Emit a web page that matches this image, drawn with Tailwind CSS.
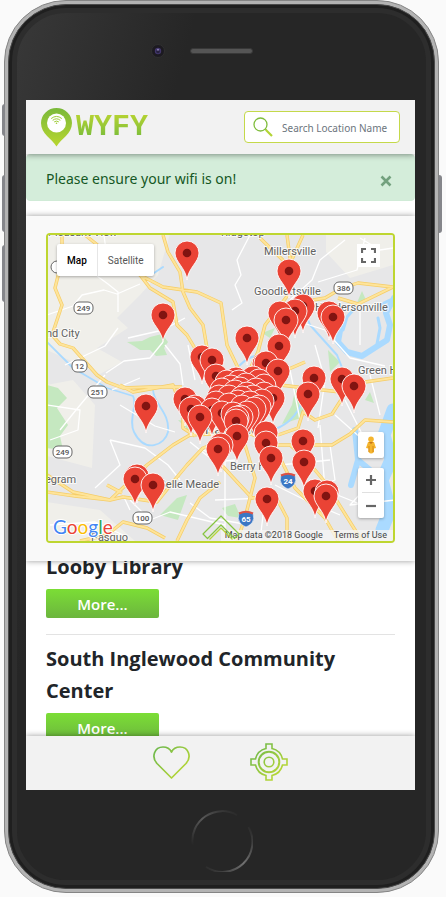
<!DOCTYPE html>
<html lang="en">
<head>
<meta charset="utf-8">
<meta name="viewport" content="width=device-width, initial-scale=1">
<title>WYFY</title>
<script src="https://cdn.jsdelivr.net/npm/@tailwindcss/browser@4"></script>
</head>
<body class="bg-[#fafafa] font-['Noto_Sans','Open_Sans',sans-serif] text-[#212529]">
<div class="h-screen min-h-[600px] pl-1 pr-[7px] pb-1">
  <div class="relative h-full rounded-[62px] bg-[#b3b3b3] border border-[#858585] p-[3px]">
    <!-- hardware buttons -->
    <i class="absolute -left-[3px] top-[103px] h-8 w-[3px] rounded-l bg-[#85868b]"></i>
    <i class="absolute -left-[3px] top-[174px] h-[57px] w-[3px] rounded-l bg-[#85868b]"></i>
    <i class="absolute -left-[3px] top-[244px] h-[57px] w-[3px] rounded-l bg-[#85868b]"></i>
    <i class="absolute -right-[4px] top-[174px] h-[58px] w-[3px] rounded-r bg-[#85868b]"></i>

    <div class="h-full rounded-[58px] border border-[#4a4a4a] bg-[#1f1f1f] p-[3px]">
      <div class="flex h-full flex-col rounded-[54px] border-[5px] border-[#2d2d2d] bg-[#262626] bg-linear-[105deg,#383838_0%,#262626_28%] pr-[11px] pl-[9px]">
        <div class="flex h-[87px] shrink-0 items-center justify-center pb-[11px] pl-[2px]">
          <div class="relative h-[6px] w-[63px] rounded-full border border-[#383838] bg-[#555]">
            <svg class="absolute -left-[41px] -top-[6px] size-4" viewBox="0 0 16 16" aria-hidden="true"><circle cx="8" cy="8" r="6.5" fill="#1c1a20" stroke="#303030"/><circle cx="8" cy="8" r="3.2" fill="#41366a"/><circle cx="8" cy="8.5" r="1.8" fill="#27213f"/><circle cx="8" cy="6.8" r="1" fill="#8e84b4"/></svg>
          </div>
        </div>

        <main class="flex min-h-0 flex-1 flex-col overflow-hidden bg-white">
          <header class="relative z-20 flex h-[54px] shrink-0 items-center justify-between bg-[#f2f2f2] px-[15px] shadow-[0_1px_6px_rgba(0,0,0,.4)]">
            <a href="#" class="flex items-center gap-1" aria-label="WYFY home">
              <svg class="h-[39px] w-[31px]" viewBox="0 0 31 39" aria-hidden="true">
                <defs><linearGradient id="g" x1="0" y1="0" x2="0" y2="1"><stop offset="0" stop-color="#7ab93a"/><stop offset="1" stop-color="#b8d62f"/></linearGradient></defs>
                <path d="M15.500 38.500C11 30.500 0 26 0 15A15.500 15 0 0 1 31 15C31 26 20 30.500 15.500 38.500Z" fill="url(#g)"/>
                <circle cx="15.500" cy="15" r="9.500" fill="#fff"/>
                <g fill="none" stroke="#9ccb35" stroke-linecap="round"><path d="M10.500 10.300Q15.500 6.300 20.500 10.300M12 12.100Q15.500 9.300 19 12.100M13.500 13.700Q15.500 12.200 17.500 13.700"/></g><circle cx="15.500" cy="15.200" r=".8" fill="#9ccb35"/>
              </svg>
              <span class="bg-linear-to-b from-[#c3d82e] to-[#62b53c] bg-clip-text font-['Liberation_Mono',monospace] text-[30px] leading-[36px] font-bold text-transparent">WYFY</span>
            </a>
            <label class="flex h-8 w-[156px] items-center gap-[9px] rounded border border-[#c4d94a] bg-white pl-2">
              <svg class="size-5 shrink-0" viewBox="0 0 20 20" fill="none" aria-hidden="true"><circle cx="7.500" cy="7.500" r="6.500" stroke="#7fbd3c" stroke-width="1.300"/><path d="M12.500 12L13.500 13.500" stroke="#8fc43a" stroke-width="1.500"/><path d="M13 13L19 19" stroke="#b3d435" stroke-width="2.200"/></svg>
              <input type="search" placeholder="Search Location Name" aria-label="Search location name" class="min-w-0 flex-1 bg-transparent pt-[2px] text-[10px] outline-none placeholder:text-[#6c757d]">
            </label>
          </header>

          <div role="alert" class="mb-[15px] flex h-[47px] shrink-0 items-center justify-between rounded border border-[#d0ebd7] bg-[#d4edda] pr-5 pl-[19px] text-sm text-[#155724]">
            <span class="pt-[3px]">Please ensure your wifi is on!</span>
            <button type="button" aria-label="Close" class="pt-[6px] opacity-50"><svg class="size-4" viewBox="0 0 16 16"><path d="M3.500 3.500L12.500 12.500M12.500 3.500L3.500 12.500" stroke="#155724" stroke-width="2.600"/></svg></button>
          </div>

          <section class="relative z-10 shrink-0 bg-[#f9f9f9] px-5 pt-[17px] pb-[18px] shadow-[0_0_6px_rgba(0,0,0,.4)]" aria-label="Map of wifi locations">
            <div class="relative h-[310px] overflow-hidden rounded border-2 border-[#bed630] bg-[#e8e8e8] font-[Roboto,sans-serif]">
              <svg class="block h-full w-full" viewBox="48 235 345 306" preserveAspectRatio="xMidYMid slice" font-family="Roboto, sans-serif">
                <defs>
                  <g id="p"><path d="M0 27C-1.500 14.500-12 9-12 0A12 12 0 0 1 12 0C12 9 1.500 14.500 0 27Z" fill="#ea4335" stroke="#fff" stroke-width=".9"/><circle r="4.300" fill="#811411"/></g>
                  <g id="q"><path d="M0 27C-1.500 14.500-12 9-12 0A12 12 0 0 1 12 0C12 9 1.500 14.500 0 27Z" fill="#ea4335" stroke="#fff" stroke-width=".9"/></g>
                  <path id="roads" d="M62 235V260L55 288 62 305 52 335 60 344 73 348 97 375 107 382 123 388 150 387 182 387M163 235L168 252 180 272 183 292 190 308 203 325 207 348 214 385M85 235L110 255 140 275 163 287 197 292 221 303 227 345 240 372 241 410M140 275L150 288 173 302 177 325 187 335 202 360M287 235L290 258 288 295 265 325 258 352 245 380 237 430M260 238L289 266 303 235M289 304L325 298 342 288 358 283 393 287M338 298L358 304 393 287M245 395L280 385 340 392 365 382 393 378M393 422L365 420 350 434 332 445 278 445 241 430M262 425L275 448 295 488 325 518 338 541M290 445L305 458 325 482 362 541M278 435L298 428 303 412 315 420 332 414 341 400M238 430L245 445 255 478 245 518 237 541M215 458L252 498 275 495 287 518 287 541M47 475L73 492 110 500 147 465 173 445 190 435 230 433M47 492L75 496 110 500 123 497 157 502 173 482 187 465 203 448 225 440M80 541L107 535 123 522 147 528 165 538M177 541L187 520 200 498 220 482M107 485L122 493M120 385L133 392 173 385 183 412 183 428 195 436M238 380L275 375 305 362"/>
                </defs>
                <rect x="40" y="225" width="365" height="325" fill="#e7e7e8"/>
                <path d="M47 234H170L158 275 140 295 117 318 128 328 97 348 122 362 100 374 47 350ZM47 385L73 380 95 405 92 468 47 456ZM326 234H393V265L350 278 326 252ZM47 502L100 510 135 541H47Z" fill="#f0efea"/>
                <path d="M127 342L142 341 150 337 162 334 168 342 164 348 167 355 156 356 150 350 140 350 134 346ZM47 385L58 388 67 398 57 408 68 425 60 436 63 450 47 448ZM160 515L177 498 187 495 178 520ZM222 508L235 504 241 518 228 516ZM282 424L292 405 295 390 307 400 301 418ZM262 333L275 328 270 338ZM356 305L362 291 366 300ZM328 350L340 362 330 372ZM178 420L192 422 190 432ZM365 400L370 392 374 403Z" fill="#c5e8c0"/>
                <g fill="none" stroke="#aadaff" stroke-linejoin="round" stroke-linecap="round"><path d="M47 342L73 368 107 388 133 396C138 404 128 420 134 432C145 454 165 445 168 432C170 412 154 405 153 390" stroke-width="1.800"/><path d="M300 298L310 325 337 355 343 370M272 430Q290 425 300 407 302 390 318 393M154 273L163 267M240 365Q260 345 280 368" stroke-width="2"/><path d="M341 325L338 342 347 352 362 356 376 347 387 340 390 325 386 313 394 298" stroke-width="6"/><path d="M343 330L347 317 354 309M377 344L380 328 378 318M386 313L380 305 390 300" stroke-width="3"/><path d="M355 430L358 460 351 485M358 460L370 470" stroke-width="6"/><path d="M393 410L384 435 391 460 382 480 390 510 382 530" stroke-width="13"/></g>
                <path d="M47 315L73 306 82 295 104 290 117 294 140 284M97 276L108 284 118 292 118 312M104 235L107 258 97 276M118 328L105 346 65 365M128 338L163 330 185 318M163 342L150 358 124 361 106 373M165 345L180 364 183 385M47 405L80 410 78 430 50 440M105 375L76 410 60 430M112 390L140 378M188 345L195 380M110 440L145 448 168 465 180 480M95 488L120 465 110 440M130 500L150 520 170 512 225 525M50 525L95 522 123 535M123 495L130 510M203 450L225 460 225 530M215 500L265 498 260 541M190 503L210 518 250 525M250 235L237 260 241 275 235 285 242 303 232 310M345 240L320 260 312 280 290 300M365 238L357 270 318 282M300 322L325 330 350 358 385 366M360 310L360 345M315 345L325 380 318 428M290 370L300 420M320 425L325 490 375 510M335 415L380 455M345 400L365 440M373 480L350 505 395 500M330 445L335 480 310 490M275 485L305 500 340 515M360 238L380 250 393 248M370 375L380 415M280 465L330 460M120 405L155 426 175 432M190 442L215 462 235 460" fill="none" stroke="#fff" stroke-width="1.300" stroke-linejoin="round"/>
                <use href="#roads" fill="none" stroke="#f5cd68" stroke-width="3.400" stroke-linejoin="round"/>
                <use href="#roads" fill="none" stroke="#fee49a" stroke-width="2" stroke-linejoin="round"/>
                <g fill="#fff" stroke="#666" stroke-width="1"><rect x="74" y="302" width="19" height="12" rx="5"/><rect x="72" y="360" width="15" height="12" rx="5"/><rect x="88" y="386" width="19" height="12" rx="5"/><rect x="53" y="446" width="19" height="12" rx="5"/><rect x="133" y="512" width="19" height="12" rx="5"/><rect x="334" y="282" width="19" height="12" rx="5"/><circle cx="57" cy="267" r="6"/></g>
                <g font-size="8" font-weight="500" fill="#555" text-anchor="middle"><text x="83.500" y="311">249</text><text x="79.500" y="369">12</text><text x="97.500" y="395">251</text><text x="62.500" y="455">249</text><text x="142.500" y="521">100</text><text x="343.500" y="291">386</text></g>
                <g id="shields"><path d="M281 475Q288 472 295 475Q297 481 294 485Q291 488 288 489Q285 488 282 485Q279 481 281 475Z" fill="#3b77c4" stroke="#fff" stroke-width=".6"/><path d="M281 475.500Q288 472 295 475.500" fill="none" stroke="#dd5145" stroke-width="2"/><path d="M239 513Q246 510 253 513Q255 519 252 523Q249 526 246 527Q243 526 240 523Q237 519 239 513Z" fill="#3b77c4" stroke="#fff" stroke-width=".6"/><path d="M239 513.500Q246 510 253 513.500" fill="none" stroke="#dd5145" stroke-width="2"/></g>
                <g font-size="8" font-weight="700" fill="#fff" text-anchor="middle"><text x="288" y="484">24</text><text x="246" y="522">65</text></g>
                <g font-size="11" fill="#616161" stroke="#fff" stroke-width="2" stroke-opacity=".75" paint-order="stroke"><text x="264" y="255">Millersville</text><text x="254" y="295">Goodlettsville</text><text x="315" y="311">Hendersonville</text><text x="358" y="374">Green Hill</text><text x="46" y="337">nd City</text><text x="45" y="483">egram</text><text x="159" y="488">Belle Meade</text><text x="230" y="470">Berry Hill</text><text x="91" y="541">Pasquo</text><text x="221" y="236">Ridgetop</text><text x="48" y="236">Pleasant View</text><text x="205" y="434" font-size="13">Nashville</text></g>
                <g>
                  <use href="#p" x="187" y="253"/><use href="#p" x="289" y="271"/><use href="#p" x="303" y="306"/><use href="#p" x="295" y="311"/><use href="#q" x="280" y="313"/><use href="#q" x="329" y="313"/><use href="#p" x="163" y="315"/><use href="#p" x="333" y="317"/><use href="#p" x="286" y="320"/><use href="#p" x="247" y="338"/><use href="#p" x="279" y="346"/><use href="#p" x="202" y="357"/><use href="#p" x="212" y="360"/><use href="#q" x="264" y="364"/><use href="#p" x="266" y="363"/><use href="#p" x="278" y="371"/><use href="#p" x="216" y="376"/><use href="#p" x="314" y="378"/><use href="#p" x="342" y="379"/>
                  <use href="#q" x="236" y="379"/><use href="#q" x="253" y="378"/><use href="#q" x="227" y="382"/><use href="#q" x="239" y="382"/><use href="#q" x="259" y="381"/><use href="#q" x="246" y="385"/><use href="#q" x="231" y="387"/><use href="#q" x="264" y="386"/><use href="#q" x="222" y="390"/><use href="#q" x="240" y="389"/><use href="#q" x="256" y="390"/><use href="#p" x="354" y="386"/><use href="#p" x="308" y="394"/><use href="#q" x="235" y="392"/><use href="#q" x="247" y="394"/><use href="#q" x="264" y="394"/><use href="#q" x="219" y="397"/><use href="#q" x="229" y="397"/><use href="#q" x="253" y="397"/><use href="#q" x="242" y="398"/><use href="#p" x="273" y="398"/><use href="#p" x="185" y="399"/><use href="#q" x="262" y="401"/><use href="#q" x="216" y="403"/><use href="#q" x="238" y="402"/><use href="#q" x="250" y="403"/><use href="#q" x="229" y="405"/><use href="#q" x="195" y="407"/><use href="#p" x="191" y="409"/><use href="#p" x="146" y="406"/><use href="#p" x="212" y="410"/><use href="#q" x="259" y="407"/><use href="#q" x="242" y="407"/><use href="#p" x="254" y="409"/><use href="#p" x="222" y="413"/><use href="#q" x="247" y="413"/><use href="#q" x="233" y="414"/><use href="#q" x="241" y="417"/><use href="#p" x="200" y="417"/><use href="#q" x="237" y="418"/><use href="#p" x="236" y="421"/>
                  <use href="#q" x="266" y="433"/><use href="#p" x="237" y="436"/><use href="#p" x="303" y="441"/><use href="#p" x="266" y="443"/><use href="#q" x="221" y="445"/><use href="#p" x="218" y="449"/><use href="#p" x="271" y="458"/><use href="#p" x="304" y="462"/><use href="#q" x="137" y="476"/><use href="#p" x="135" y="479"/><use href="#p" x="153" y="485"/><use href="#p" x="315" y="491"/><use href="#q" x="327" y="492"/><use href="#p" x="326" y="496"/><use href="#p" x="267" y="499"/>
                </g>
                <text x="53" y="534" font-family="Lato, sans-serif" font-size="19" font-weight="400" stroke="#fff" stroke-width="2" paint-order="stroke"><tspan fill="#4285f4">G</tspan><tspan fill="#ea4335">o</tspan><tspan fill="#fbbc05">o</tspan><tspan fill="#4285f4">g</tspan><tspan fill="#34a853">l</tspan><tspan fill="#ea4335">e</tspan></text>
              </svg>
              <div class="absolute right-0 bottom-0 flex h-[11px] items-center gap-[11px] bg-[#f5f5f5]/75 pr-[6px] pl-1 text-[9px] text-[#444]"><span>Map data ©2018 Google</span><a href="#">Terms of Use</a></div>
              <div class="absolute top-[9px] left-[9px] flex h-8 rounded-xs bg-white text-[10px] shadow-[0_1px_3px_rgba(0,0,0,.3)]">
                <button type="button" class="border-r border-[#e6e6e6] px-[10px] font-medium text-black">Map</button>
                <button type="button" class="px-[10px] text-[#565656]">Satellite</button>
              </div>
              <button type="button" aria-label="Full screen" class="absolute top-[9px] right-[13px] grid size-[23px] place-items-center bg-white"><svg class="size-[15px]" viewBox="0 0 15 15" fill="none" stroke="#666" stroke-width="2.200"><path d="M1 5V1H5M10 1H14V5M14 10V14H10M5 14H1V10"/></svg></button>
              <button type="button" aria-label="Street View" class="absolute right-[9px] bottom-[83px] grid size-[26px] place-items-center rounded-xs bg-white shadow-[0_1px_3px_rgba(0,0,0,.3)]"><svg class="h-[18px] w-3" viewBox="0 0 12 18"><path d="M3 6Q6 5 9 6L11 12 9 12.500V16Q6 19 3.500 16V12.500L1 12Z" fill="#f5b52e"/><path d="M4 10V16M8 10V16" stroke="#d68b1a"/><circle cx="6" cy="3.300" r="2.800" fill="#f5b52e"/><path d="M3.800 6L6 8 8.200 6Z" fill="#c4761b"/></svg></button>
              <div class="absolute right-[9px] bottom-[23px] flex w-[26px] flex-col rounded-xs bg-white shadow-[0_1px_3px_rgba(0,0,0,.3)]">
                <button type="button" aria-label="Zoom in" class="mx-1 grid h-[25px] place-items-center border-b border-[#e0e0e0]"><svg class="size-[10px]" viewBox="0 0 10 10" stroke="#666" stroke-width="2.200"><path d="M0 5H10M5 0V10"/></svg></button>
                <button type="button" aria-label="Zoom out" class="grid h-[25px] place-items-center"><svg class="size-[10px]" viewBox="0 0 10 10" stroke="#666" stroke-width="2.200"><path d="M0 5H10"/></svg></button>
              </div>
            </div>
            <button type="button" aria-label="Collapse map" class="absolute bottom-5 left-1/2 -translate-x-1/2"><svg class="h-[26px] w-[38px]" viewBox="0 0 38 26" fill="none" stroke="#86c440" stroke-width="1.200" stroke-linejoin="round"><path d="M1 19L19 1 37 19 32.500 23.500 19 10 5.500 23.500Z"/><path d="M7.500 24.500L19 13" stroke="#b4d438"/><path d="M30.500 24.500L19 13" stroke="#b4d438"/></svg></button>
          </section>

          <section class="min-h-0 flex-1 overflow-hidden px-5 font-['Open_Sans',sans-serif]" aria-label="Locations">
            <article class="-mt-[10px] border-b border-[#e3e3e3] pb-4">
              <h2 class="mb-[6px] text-xl leading-8 font-bold">Looby Library</h2>
              <button type="button" class="block h-[29px] w-[113px] rounded-xs bg-linear-to-b from-[#7bde35] to-[#6cb53d] pt-px text-[15px] leading-[29px] font-semibold text-white">More...</button>
            </article>
            <article class="pt-2">
              <h2 class="mb-[6px] text-xl leading-8 font-bold">South Inglewood Community Center</h2>
              <button type="button" class="block h-[29px] w-[113px] rounded-xs bg-linear-to-b from-[#7bde35] to-[#6cb53d] pt-px text-[15px] leading-[29px] font-semibold text-white">More...</button>
            </article>
          </section>

          <nav class="relative z-10 flex h-[54px] shrink-0 items-center justify-center gap-[60px] bg-[#f2f2f2] pb-[2px] shadow-[0_0_6px_rgba(0,0,0,.4)]" aria-label="Main">
            <svg width="0" height="0" class="absolute" aria-hidden="true"><defs><linearGradient id="d" gradientUnits="userSpaceOnUse" x1="0" y1="0" x2="38" y2="38"><stop offset=".15" stop-color="#72ba4a"/><stop offset=".85" stop-color="#bdd935"/></linearGradient></defs></svg>
            <a href="#" aria-label="Favorites"><svg class="h-[38px] w-[37px]" viewBox="0 0 37 38" fill="none"><path d="M18.500 35L4 20.500C-2 14 1.500 4 10 4C14.500 4 17 6 18.500 9C20 6 22.500 4 27 4C35.500 4 39 14 33 20.500Z" stroke="url(#d)" stroke-width="1.700" stroke-linejoin="round"/></svg></a>
            <a href="#" aria-label="My location"><svg class="size-[38px]" viewBox="0 0 38 38" fill="none" stroke="url(#d)"><path d="M16 1H22V5.500Q30.500 7.500 32.500 16H37V22H32.500Q30.500 30.500 22 32.500V37H16V32.500Q7.500 30.500 5.500 22H1V16H5.500Q7.500 7.500 16 5.500Z" stroke-width="1.600"/><circle cx="19" cy="19" r="10.300" stroke-width="2"/><circle cx="19" cy="19" r="4.800" stroke-width="1.600"/></svg></a>
          </nav>
        </main>

        <div class="grid h-[90px] shrink-0 place-items-center pt-3 pl-[2px]">
          <button type="button" aria-label="Home" class="block"><svg class="size-[62px]" viewBox="0 0 62 62" fill="none" stroke-width="2"><defs><linearGradient id="h1" x1="0" y1="1" x2="1" y2="0"><stop stop-color="#262626"/><stop offset=".5" stop-color="#595959"/><stop offset="1" stop-color="#262626"/></linearGradient><linearGradient id="h2" x1="0" y1="1" x2="1" y2="0"><stop stop-color="#262626"/><stop offset=".5" stop-color="#707070"/><stop offset="1" stop-color="#262626"/></linearGradient></defs><path d="M1.500 35A30 30 0 0 1 46 5" stroke="url(#h1)"/><path d="M57.500 17A30 30 0 0 1 15 57" stroke="url(#h2)"/></svg></button>
        </div>
      </div>
    </div>
  </div>
</div>
</body>
</html>
